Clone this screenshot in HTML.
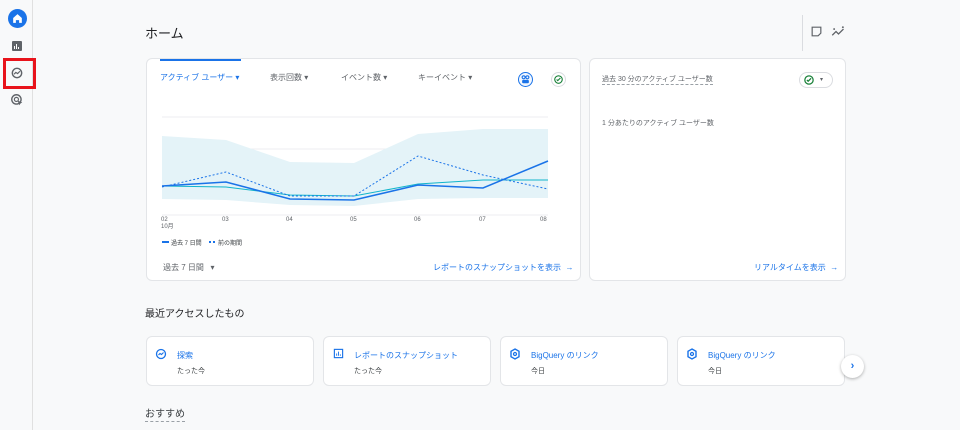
<!DOCTYPE html>
<html><head><meta charset="utf-8"><style>
*{margin:0;padding:0;box-sizing:border-box}
body{width:960px;height:430px;overflow:hidden;background:#f8f9fa;font-family:"Liberation Sans","Noto Sans CJK JP",sans-serif;color:#202124;position:relative}
.a{position:absolute}
.card{position:absolute;background:#fff;border:1px solid #e3e5e8;border-radius:6px}
.t{font-size:8px;color:#5f6368;white-space:nowrap}
.blue{color:#1a73e8}
</style></head><body>
<div class="a" style="left:0;top:0;width:33px;height:430px;border-right:1px solid #e0e0e0;background:#f8f9fa"></div>
<div class="a" style="left:8px;top:9px;width:19px;height:19px;border-radius:50%;background:#1a73e8"></div>
<svg class="a" style="left:11px;top:12px" width="13" height="13" viewBox="0 0 24 24"><path d="M12 4L4 11v9h5v-5h6v5h5v-9z" fill="#fff"/></svg>
<div class="a" style="left:12px;top:41px;width:10px;height:10px;background:#5f6368;border-radius:1px"></div>
<div class="a" style="left:14px;top:46px;width:1px;height:3px;background:#fff"></div><div class="a" style="left:16px;top:44px;width:1px;height:5px;background:#fff"></div><div class="a" style="left:18px;top:47px;width:1px;height:2px;background:#fff"></div>
<div class="a" style="left:3px;top:58px;width:33px;height:31px;border:3px solid #e8131b"></div>
<svg class="a" style="left:10px;top:66px" width="14" height="14" viewBox="0 0 24 24"><circle cx="12" cy="12" r="8" fill="none" stroke="#5f6368" stroke-width="2.4"/><path d="M7 14l3-3 3 2 4-4" fill="none" stroke="#5f6368" stroke-width="2"/></svg>
<svg class="a" style="left:10px;top:93px" width="14" height="14" viewBox="0 0 24 24"><circle cx="11" cy="11" r="8" fill="none" stroke="#5f6368" stroke-width="2.4"/><circle cx="11" cy="11" r="3.5" fill="none" stroke="#5f6368" stroke-width="2"/><path d="M13 13l8 3-3 2-2 3z" fill="#5f6368"/></svg>

<div class="a" style="left:145px;top:23px;font-size:13px;color:#202124">ホーム</div>
<div class="a" style="left:802px;top:15px;width:1px;height:36px;background:#dadce0"></div>
<svg class="a" style="left:810px;top:25px" width="13" height="13" viewBox="0 0 24 24"><path d="M4 4h16v11l-5 5H4z" fill="none" stroke="#5f6368" stroke-width="2.2"/></svg>
<svg class="a" style="left:831px;top:25px" width="15" height="13" viewBox="0 0 24 20"><path d="M2 16l6-6 4 4 8-8" fill="none" stroke="#5f6368" stroke-width="2"/><circle cx="19" cy="3" r="1.5" fill="#5f6368"/><circle cx="5" cy="6" r="1.5" fill="#5f6368"/></svg>

<div class="card" style="left:146px;top:58px;width:435px;height:223px"></div>
<div class="a" style="left:160px;top:59px;width:81px;height:2px;background:#1a73e8"></div>
<div class="a t blue" style="left:160px;top:72px">アクティブ ユーザー ▾</div>
<div class="a t" style="left:270px;top:72px">表示回数 ▾</div>
<div class="a t" style="left:341px;top:72px">イベント数 ▾</div>
<div class="a t" style="left:418px;top:72px">キーイベント ▾</div>
<div class="a" style="left:518px;top:72px;width:15px;height:15px;border-radius:50%;border:1px solid #1a73e8;background:#f1f6fe"></div>
<svg class="a" style="left:521px;top:75px" width="9" height="9" viewBox="0 0 24 24"><circle cx="7" cy="6" r="4" fill="none" stroke="#1a73e8" stroke-width="3"/><circle cx="17" cy="6" r="4" fill="none" stroke="#1a73e8" stroke-width="3"/><rect x="3" y="13" width="18" height="9" rx="3" fill="#1a73e8"/></svg>
<div class="a" style="left:551px;top:72px;width:15px;height:15px;border-radius:50%;border:1px solid #dadce0"></div>
<svg class="a" style="left:554px;top:75px" width="9" height="9" viewBox="0 0 24 24"><circle cx="12" cy="12" r="10" fill="none" stroke="#188038" stroke-width="3"/><path d="M7 12l3 3 7-7" fill="none" stroke="#188038" stroke-width="3"/></svg>
<svg class="a" style="left:0;top:0" width="960" height="430">
<g stroke="#eceef0" stroke-width="1"><line x1="162" y1="117" x2="548" y2="117"/><line x1="162" y1="149" x2="548" y2="149"/><line x1="162" y1="182" x2="548" y2="182"/><line x1="162" y1="215" x2="548" y2="215"/></g>
<polygon points="162,136 226,140 290,162 354,163 418,134 483,129 548,129 548,198 483,198 418,199 354,206 290,205 226,200 162,199" fill="#e4f3f8"/>
<polyline points="162,186 226,187 290,195 354,196 418,184 483,180 548,180" fill="none" stroke="#12b5cb" stroke-width="1"/>
<polyline points="162,187 226,172 290,196 354,196 418,156 483,175 548,189" fill="none" stroke="#1a73e8" stroke-width="1" stroke-dasharray="2,2"/>
<polyline points="162,186 226,182 290,199 354,200 418,185 483,188 548,161" fill="none" stroke="#1a73e8" stroke-width="1.5"/>
<line x1="162" y1="242" x2="169" y2="242" stroke="#1a73e8" stroke-width="2"/>
<line x1="209" y1="242" x2="216" y2="242" stroke="#1a73e8" stroke-width="2" stroke-dasharray="2,2"/>
</svg>
<div class="a" style="left:161px;top:217px;font-size:6px;color:#5f6368;line-height:7px">02<br>10月</div>
<div class="a" style="left:222px;top:217px;font-size:6px;color:#5f6368">03</div>
<div class="a" style="left:286px;top:217px;font-size:6px;color:#5f6368">04</div>
<div class="a" style="left:350px;top:217px;font-size:6px;color:#5f6368">05</div>
<div class="a" style="left:414px;top:217px;font-size:6px;color:#5f6368">06</div>
<div class="a" style="left:479px;top:217px;font-size:6px;color:#5f6368">07</div>
<div class="a" style="left:540px;top:217px;font-size:6px;color:#5f6368">08</div>
<div class="a" style="left:171px;top:238px;font-size:6px;color:#3c4043">過去 7 日間</div>
<div class="a" style="left:218px;top:238px;font-size:6px;color:#3c4043">前の期間</div>
<div class="a t" style="left:163px;top:262px">過去 7 日間 &nbsp;&nbsp;▾</div>
<div class="a t blue" style="left:433px;top:262px">レポートのスナップショットを表示 &nbsp;→</div>

<div class="card" style="left:589px;top:58px;width:257px;height:223px"></div>
<div class="a t" style="left:602px;top:74px;font-size:7px;border-bottom:1px dashed #9aa0a6">過去 30 分のアクティブ ユーザー数</div>
<div class="a" style="left:799px;top:72px;width:34px;height:16px;border-radius:8px;border:1px solid #dadce0"></div>
<svg class="a" style="left:804px;top:75px" width="10" height="10" viewBox="0 0 24 24"><circle cx="12" cy="12" r="10" fill="none" stroke="#188038" stroke-width="3"/><path d="M7 12l3 3 7-7" fill="none" stroke="#188038" stroke-width="3"/></svg>
<div class="a" style="left:820px;top:76px;font-size:6px;color:#5f6368">▾</div>
<div class="a t" style="left:602px;top:118px;font-size:7px">1 分あたりのアクティブ ユーザー数</div>
<div class="a t blue" style="left:754px;top:262px">リアルタイムを表示 &nbsp;→</div>

<div class="a" style="left:145px;top:305px;font-size:10px;color:#202124">最近アクセスしたもの</div>
<div class="card" style="left:146px;top:336px;width:168px;height:50px"></div>
<div class="card" style="left:323px;top:336px;width:168px;height:50px"></div>
<div class="card" style="left:500px;top:336px;width:168px;height:50px"></div>
<div class="card" style="left:677px;top:336px;width:168px;height:50px"></div>
<svg class="a" style="left:155px;top:348px" width="12" height="12" viewBox="0 0 24 24"><circle cx="12" cy="12" r="9" fill="none" stroke="#1a73e8" stroke-width="2.6"/><path d="M7 14l3-3 3 2 4-4" fill="none" stroke="#1a73e8" stroke-width="2.2"/></svg>
<div class="a t blue" style="left:177px;top:350px">探索</div><div class="a t" style="left:177px;top:366px;color:#3c4043;font-size:7px">たった今</div>
<svg class="a" style="left:333px;top:348px" width="11" height="11" viewBox="0 0 24 24"><rect x="3" y="3" width="18" height="18" fill="none" stroke="#1a73e8" stroke-width="2.5"/><path d="M8 17v-5M12 17V8M16 17v-3" stroke="#1a73e8" stroke-width="2"/></svg>
<div class="a t blue" style="left:354px;top:350px">レポートのスナップショット</div><div class="a t" style="left:354px;top:366px;color:#3c4043;font-size:7px">たった今</div>
<svg class="a" style="left:509px;top:348px" width="12" height="12" viewBox="0 0 24 24"><path d="M12 2l8 4.5v11L12 22l-8-4.5v-11z" fill="none" stroke="#1a73e8" stroke-width="2.8"/><circle cx="12" cy="12" r="3" fill="none" stroke="#1a73e8" stroke-width="2.5"/></svg>
<div class="a t blue" style="left:531px;top:350px">BigQuery のリンク</div><div class="a t" style="left:531px;top:366px;color:#3c4043;font-size:7px">今日</div>
<svg class="a" style="left:686px;top:348px" width="12" height="12" viewBox="0 0 24 24"><path d="M12 2l8 4.5v11L12 22l-8-4.5v-11z" fill="none" stroke="#1a73e8" stroke-width="2.8"/><circle cx="12" cy="12" r="3" fill="none" stroke="#1a73e8" stroke-width="2.5"/></svg>
<div class="a t blue" style="left:708px;top:350px">BigQuery のリンク</div><div class="a t" style="left:708px;top:366px;color:#3c4043;font-size:7px">今日</div>
<div class="a" style="left:841px;top:355px;width:23px;height:23px;border-radius:50%;background:#fff;box-shadow:0 1px 3px rgba(0,0,0,.3);color:#1a73e8;font-size:11px;text-align:center;line-height:22px;font-weight:bold">›</div>
<div class="a" style="left:145px;top:408px;font-size:10px;color:#3c4043;border-bottom:1px dashed #9aa0a6;line-height:13px">おすすめ</div>
</body></html>
